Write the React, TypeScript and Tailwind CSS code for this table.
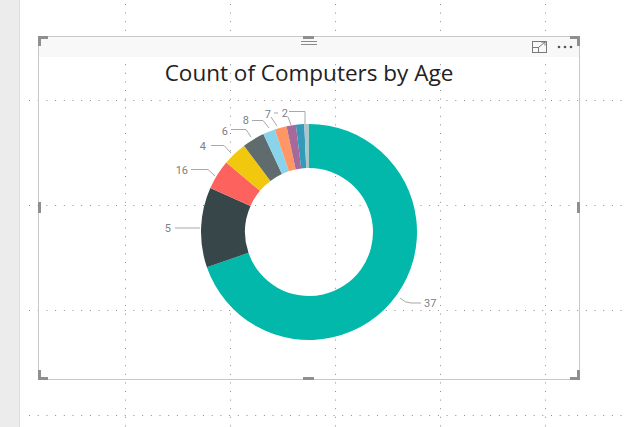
import React from 'react';

// donut slices, angles clockwise from 12 o'clock
const slices = [
  {from: 0, to: 251, color: '#01B8AA'},
  {from: 251, to: 294, color: '#374649'},
  {from: 294, to: 310, color: '#FD625E'},
  {from: 310, to: 323, color: '#F2C80F'},
  {from: 323, to: 335, color: '#5F6B6D'},
  {from: 335, to: 341.6, color: '#8AD4EB'},
  {from: 341.6, to: 348, color: '#FE9666'},
  {from: 348, to: 353, color: '#A66999'},
  {from: 353, to: 357.5, color: '#3599B8'},
  {from: 357.5, to: 360, color: '#A9C6C9'},
];

const labels = [
  {text: '37', x: 424, y: 307, anchor: 'start', line: 'M400 298 Q405 303 411 303 L421 303'},
  {text: '5', x: 171, y: 232, anchor: 'end', line: 'M175 228 L200 228'},
  {text: '16', x: 188, y: 174, anchor: 'end', line: 'M191 169.5 L208 169.5 L215 176'},
  {text: '4', x: 206, y: 150, anchor: 'end', line: 'M211 145.5 L224 145.5 L231 153'},
  {text: '6', x: 228, y: 135, anchor: 'end', line: 'M231 129.5 L246 129.5 L251 137'},
  {text: '8', x: 249, y: 124, anchor: 'end', line: 'M252 120.5 L263 120.5 L269 128'},
  {text: '7', x: 271, y: 118, anchor: 'end', line: 'M271 117 L277 126'},
  {text: '2', x: 288, y: 117, anchor: 'end', line: 'M274 113 L278 113 M288 117 L291 125 M289 111.5 L305 111.5 L305 124'},
];

const CX = 309;
const CY = 232;
const R = 108;
const r = 64;

function pt(rad: number, deg: number) {
  const a = (deg * Math.PI) / 180;
  return [CX + rad * Math.sin(a), CY - rad * Math.cos(a)];
}

function arc(from: number, to: number) {
  const large = to - from > 180 ? 1 : 0;
  const [x1, y1] = pt(R, from);
  const [x2, y2] = pt(R, to);
  const [x3, y3] = pt(r, to);
  const [x4, y4] = pt(r, from);
  return `M${x1} ${y1} A${R} ${R} 0 ${large} 1 ${x2} ${y2} L${x3} ${y3} A${r} ${r} 0 ${large} 0 ${x4} ${y4} Z`;
}

const GridDots = () => {
  const dots: React.ReactNode[] = [];
  [100, 205, 310, 415].forEach(y => {
    for (let x = 29; x < 627; x += 8.7) dots.push(<rect key={`h${y}-${x}`} x={x} y={y} width={1} height={1} />);
  });
  [125, 230, 335, 440, 545].forEach(x => {
    for (let y = 4; y < 427; y += 8.6) dots.push(<rect key={`v${x}-${y}`} x={x} y={y} width={1} height={1} />);
  });
  return (
    <svg className="absolute inset-0" width={627} height={427} fill="#8e8e8e">
      {dots}
    </svg>
  );
};

const Handle = ({className}: {className: string}) => <div className={`absolute bg-[#8f8f8f] ${className}`} />;

export default function App() {
  return (
    <div className="relative flex h-[427px] w-[627px] overflow-hidden bg-white font-['Open_Sans',sans-serif]">
      <GridDots />
      <div className="relative w-[20px] shrink-0 border-r border-[#dcdcdc] bg-[#ececec]" />
      <div className="relative flex-1">
        <div className="absolute left-[18px] top-[36px] flex h-[344px] w-[542px] flex-col border border-[#c8c8c8]">
          <div className="grid h-[20px] grid-cols-3 bg-[#f8f8f8]">
            <div />
            <div className="flex flex-col items-center gap-[2px] pt-[4px]">
              <div className="h-px w-[16px] bg-[#8a8a8a]" />
              <div className="h-px w-[16px] bg-[#8a8a8a]" />
            </div>
            <div className="flex items-center justify-end gap-[10px] pr-[6px]">
              <svg width="15" height="12" viewBox="0 0 15 12" fill="none" stroke="#7a7a7a" strokeWidth="1">
                <rect x="0.5" y="0.5" width="14" height="11" />
                <rect x="0.5" y="6.5" width="6" height="5" />
                <path d="M6.5 6.5 L13 1 M9 1 L13 1 L13 4.5" />
              </svg>
              <svg width="16" height="4" viewBox="0 0 16 4" fill="#555">
                <circle cx="2" cy="2" r="1.3" />
                <circle cx="8" cy="2" r="1.3" />
                <circle cx="14" cy="2" r="1.3" />
              </svg>
            </div>
          </div>
          <div className="flex h-[38px] items-center justify-center pb-[6px] text-[22.5px] leading-none text-[#222]">
            Count of Computers by Age
          </div>
          <svg className="w-full flex-1" viewBox="39 95 540 284" preserveAspectRatio="xMinYMin meet">
            {slices.map(s => (
              <path key={s.from} d={arc(s.from, s.to)} fill={s.color} />
            ))}
            <g fill="none" stroke="#a8a8a8" strokeWidth="1">
              {labels.map(l => (
                <path key={l.text} d={l.line} />
              ))}
            </g>
            <g fill="#808080" fontSize="11" fontFamily="Roboto, sans-serif">
              {labels.map(l => (
                <text key={l.text} x={l.x} y={l.y} textAnchor={l.anchor as 'start' | 'end'}>
                  {l.text}
                </text>
              ))}
            </g>
          </svg>
          {/* selection handles */}
          <Handle className="-left-px -top-px h-[3px] w-[10px]" />
          <Handle className="-left-px -top-px h-[10px] w-[3px]" />
          <Handle className="-right-px -top-px h-[3px] w-[10px]" />
          <Handle className="-right-px -top-px h-[10px] w-[3px]" />
          <Handle className="-bottom-px -left-px h-[3px] w-[10px]" />
          <Handle className="-bottom-px -left-px h-[10px] w-[3px]" />
          <Handle className="-bottom-px -right-px h-[3px] w-[10px]" />
          <Handle className="-bottom-px -right-px h-[10px] w-[3px]" />
          <Handle className="-top-px left-[264px] h-[3px] w-[11px]" />
          <Handle className="-bottom-px left-[264px] h-[3px] w-[11px]" />
          <Handle className="-left-px top-[165px] h-[11px] w-[3px]" />
          <Handle className="-right-px top-[165px] h-[11px] w-[3px]" />
        </div>
      </div>
    </div>
  );
}
